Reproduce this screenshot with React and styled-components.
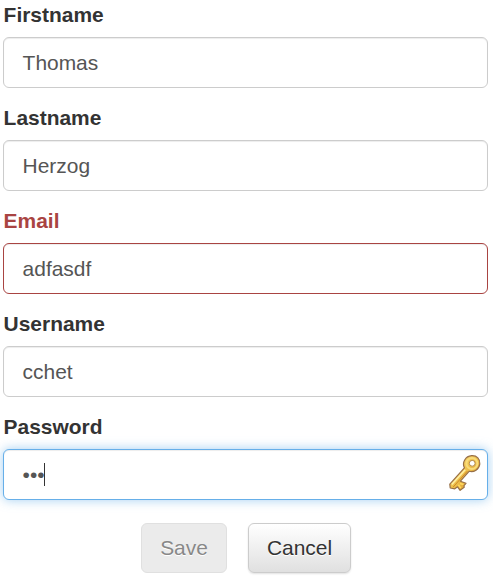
import React from 'react';
import styled, { createGlobalStyle, css } from 'styled-components';

const GlobalStyle = createGlobalStyle`
  * { box-sizing: border-box; }
  body {
    margin: 0;
    background: #fff;
    font-family: "Liberation Sans", Arial, sans-serif;
    font-size: 20.95px;
    color: #333;
  }
`;

const Form = styled.form`
  width: 493px;
  height: 580px;
  padding: 0 5px 0 3px;
  overflow: hidden;
`;

const Field = styled.div`
  height: 103px;
  display: flex;
  flex-direction: column;
`;

const Label = styled.label`
  height: 37px;
  flex: none;
  padding-left: 0.6px;
  line-height: 30px;
  font-weight: bold;
  color: ${(p) => (p.$error ? '#a94442' : '#333')};
`;

const Control = styled.div`
  height: 51px;
  flex: none;
  display: flex;
  align-items: center;
  padding: 0 6px 0 18.6px;
  border: 1px solid #ccc;
  border-radius: 6px;
  background: #fff;
  color: #555;
  box-shadow: inset 0 1px 1px rgba(0, 0, 0, 0.075);
  ${(p) => p.$error && css`border-color: #a94442;`}
  ${(p) => p.$focused && css`
    border-color: #66afe9;
    box-shadow: inset 0 1px 1px rgba(0, 0, 0, 0.075), 0 0 11px rgba(102, 175, 233, 0.6);
  `}
`;

const Value = styled.span`
  line-height: 24px;
`;

const Caret = styled.span`
  width: 1px;
  height: 23px;
  margin: -1px 0 0 -0.7px;
  background: #333;
`;

const KeySvg = styled.svg`
  display: block;
  margin: -3px 0 0 auto;
`;

const Actions = styled.div`
  display: flex;
  gap: 21px;
  padding: 8px 0 0 138px;
`;

const Button = styled.button`
  width: ${(p) => p.$width}px;
  height: 50px;
  padding: 0;
  border: 1px solid #ccc;
  border-radius: 6px;
  font: inherit;
  color: #333;
  text-shadow: 0 1px 0 #fff;
  background: linear-gradient(#fff, #e0e0e0);
  box-shadow: inset 0 1px 0 rgba(255, 255, 255, 0.15), 0 1px 2px rgba(0, 0, 0, 0.12);
  &:disabled {
    color: #888;
    border-color: #e0e0e0;
    background: #ebebeb;
    box-shadow: none;
  }
`;

function KeyIcon() {
  return (
    <KeySvg width="34" height="38" viewBox="0 0 34 38" aria-hidden="true">
      <defs>
        <linearGradient id="gold" x1="0" y1="0" x2="1" y2="1">
          <stop offset="0" stopColor="#fbe184" />
          <stop offset="0.5" stopColor="#efc04a" />
          <stop offset="1" stopColor="#cf8a24" />
        </linearGradient>
      </defs>
      <path
        d="M17.4 13.8C14.8 8.5 18.4 2.2 24.6 1.7C29.8 1.3 33.4 5.1 32.8 10C32.2 15.5 26.8 18.8 22.1 17.3L13.4 27.2L19 29.3L17 31.6L17.2 33.2L13.1 36.4L10.6 32.8L7.8 34.8L3.2 34L2.8 30.2Z"
        fill="url(#gold)"
        stroke="#987048"
        strokeWidth="1.2"
        strokeLinejoin="round"
      />
      <path d="M4.8 30.5L18.2 15.7" fill="none" stroke="#fff0a5" strokeWidth="1.6" />
      <path d="M6.2 33L20.4 17.1" fill="none" stroke="#cd8829" strokeWidth="1" />
      <path d="M11.4 30.8L13.8 34.1M13 29.5L16.4 30.4" fill="none" stroke="#ffd960" strokeWidth="1.5" />
      <circle cx="24.9" cy="9.5" r="5.5" fill="none" stroke="#f8dc7b" strokeWidth="2" />
      <circle cx="25.2" cy="9.3" r="2.9" fill="#fff" stroke="#b58d50" strokeWidth="1" />
    </KeySvg>
  );
}

const fields = [
  { label: 'Firstname', value: 'Thomas' },
  { label: 'Lastname', value: 'Herzog' },
  { label: 'Email', value: 'adfasdf', error: true },
  { label: 'Username', value: 'cchet' },
  { label: 'Password', value: '•••', focused: true },
];

export default function App() {
  return (
    <>
      <GlobalStyle />
      <Form>
        {fields.map((f) => (
          <Field key={f.label}>
            <Label $error={f.error}>{f.label}</Label>
            <Control $error={f.error} $focused={f.focused}>
              <Value>{f.value}</Value>
              {f.focused && <Caret />}
              {f.focused && <KeyIcon />}
            </Control>
          </Field>
        ))}
        <Actions>
          <Button type="button" $width={86} disabled>Save</Button>
          <Button type="button" $width={103}>Cancel</Button>
        </Actions>
      </Form>
    </>
  );
}
